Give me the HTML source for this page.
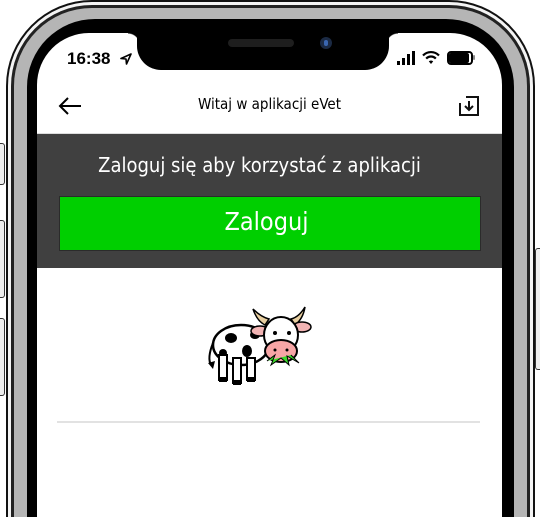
<!DOCTYPE html>
<html><head><meta charset="utf-8"><style>
html,body{margin:0;padding:0;width:541px;height:517px;overflow:hidden;background:#fff;font-family:"Liberation Sans",sans-serif;}
#wrap{position:relative;width:541px;height:517px;overflow:hidden;}
.abs{position:absolute;}
</style></head><body><div id="wrap">
<div class="abs" style="left:0;top:143px;width:4px;height:40px;border:1px solid #333;border-left:none;border-radius:0 3px 3px 0;background:#eee;"></div>
<div class="abs" style="left:0;top:220px;width:4px;height:76px;border:1px solid #333;border-left:none;border-radius:0 3px 3px 0;background:#eee;"></div>
<div class="abs" style="left:0;top:318px;width:4px;height:76px;border:1px solid #333;border-left:none;border-radius:0 3px 3px 0;background:#eee;"></div>
<div class="abs" style="left:535px;top:248px;width:4px;height:120px;border:1px solid #333;border-right:none;border-radius:3px 0 0 3px;background:#eee;"></div>
<div class="abs" style="left:6px;top:0px;width:529px;height:517px;border-radius:86px 86px 0 0;background:#111;"></div>
<div class="abs" style="left:8px;top:2px;width:525px;height:515px;border-radius:84px 84px 0 0;background:#f4f4f4;"></div>
<div class="abs" style="left:11px;top:5px;width:519px;height:512px;border-radius:81px 81px 0 0;background:#222;"></div>
<div class="abs" style="left:14px;top:8px;width:513px;height:509px;border-radius:78px 78px 0 0;background:#b5b5b5;"></div>
<div class="abs" style="left:27px;top:19px;width:487px;height:498px;border-radius:68px 68px 0 0;background:#000;"></div>
<div class="abs" style="left:37px;top:33px;width:465px;height:484px;border-radius:52px 52px 0 0;background:#fff;overflow:hidden;">
  <div class="abs" style="left:100px;top:-10px;width:252px;height:47px;background:#000;border-radius:0 0 24px 24px;"></div>
  <div class="abs" style="left:91px;top:0;width:12px;height:12px;background:radial-gradient(circle at 0 100%,transparent 11px,#000 12px);"></div>
  <div class="abs" style="left:349px;top:0;width:12px;height:12px;background:radial-gradient(circle at 100% 100%,transparent 11px,#000 12px);"></div>
  <div class="abs" style="left:191px;top:6px;width:66px;height:8px;border-radius:4px;background:#1e1e1e;"></div>
  <div class="abs" style="left:283px;top:4px;width:12px;height:12px;border-radius:6px;background:#1b2a44;"></div>
  <div class="abs" style="left:287px;top:7px;width:4px;height:6px;border-radius:2px;background:#3a66b0;"></div>
  <div class="abs" style="left:30px;top:16px;font-size:17px;font-weight:bold;color:#000;">16:38</div>
  <svg class="abs" style="left:83px;top:20px" width="12" height="12" viewBox="0 0 12 12"><path d="M11 1 L1 5.5 L6 6 L6.5 11 Z" fill="none" stroke="#000" stroke-width="1.6" stroke-linejoin="round"/></svg>
  <div class="abs" style="left:360px;top:28px;width:3px;height:4px;background:#000"></div>
  <div class="abs" style="left:365px;top:25px;width:3px;height:7px;background:#000"></div>
  <div class="abs" style="left:370px;top:21px;width:3px;height:11px;background:#000"></div>
  <div class="abs" style="left:375px;top:18px;width:3px;height:14px;background:#000"></div>
  <svg class="abs" style="left:385px;top:17px" width="18" height="15" viewBox="0 0 18 15"><path d="M1 5.5 A11 11 0 0 1 17 5.5" fill="none" stroke="#000" stroke-width="2.2"/><path d="M4.2 8.6 A6.5 6.5 0 0 1 13.8 8.6" fill="none" stroke="#000" stroke-width="2.2"/><path d="M9 14 L6.8 11.4 A3 3 0 0 1 11.2 11.4 Z" fill="#000"/></svg>
  <div class="abs" style="left:410px;top:18px;width:22px;height:10px;border:2px solid #000;border-radius:4px;"></div>
  <div class="abs" style="left:412px;top:20px;width:20px;height:10px;border-radius:2px;background:#000;"></div>
  <div class="abs" style="left:436px;top:22px;width:2px;height:5px;background:#888;border-radius:1px;"></div>
  <svg class="abs" style="left:20px;top:62px" width="26" height="22" viewBox="0 0 26 22"><path d="M24 11 H3 M11 3 L3 11 L11 19" fill="none" stroke="#000" stroke-width="2"/></svg>
  <div class="abs" style="left:0;width:465px;top:62px;text-align:center;font-size:15px;color:#000;font-family:'DejaVu Sans Condensed','Liberation Sans',sans-serif;">Witaj w aplikacji eVet</div>
  <svg class="abs" style="left:421px;top:62px" width="22" height="22" viewBox="0 0 22 22"><path d="M8 2 H20 V20 H2 V8" fill="none" stroke="#111" stroke-width="2"/><path d="M11 6 V15 M7 11 L11 15 L15 11" fill="none" stroke="#111" stroke-width="2"/></svg>
  <div class="abs" style="left:0;top:101px;width:465px;height:134px;background:#404040;"></div>
  <div class="abs" style="left:0;top:100px;width:465px;height:1px;background:#ddd;"></div>
  <div class="abs" style="left:0;width:445px;top:120px;text-align:center;font-size:20px;color:#fff;font-family:'DejaVu Sans Condensed','Liberation Sans',sans-serif;">Zaloguj się aby korzystać z aplikacji</div>
  <div class="abs" style="left:22px;top:163px;width:420px;height:53px;background:#00cf00;border:1px solid #2b2b2b;"></div>
  <div class="abs" style="left:22px;width:415px;top:174px;text-align:center;font-size:25px;color:#fff;font-family:'DejaVu Sans Condensed','Liberation Sans',sans-serif;">Zaloguj</div>
  <div class="abs" style="left:20px;top:388px;width:423px;height:2px;background:#e2e2e2;"></div>
  <svg class="abs" style="left:168px;top:270px" width="110" height="85" viewBox="0 0 110 85">
    <path d="M8 40 Q2 55 6 62" fill="none" stroke="#000" stroke-width="2"/>
    <path d="M3 60 L8 66 L10 58Z" fill="#000"/>
    <ellipse cx="36" cy="42" rx="28" ry="20" fill="#fff" stroke="#000" stroke-width="2.5"/>
    <ellipse cx="26" cy="35" rx="6" ry="5" fill="#000"/>
    <ellipse cx="42" cy="48" rx="5" ry="6" fill="#000"/>
    <ellipse cx="50" cy="32" rx="5" ry="4" fill="#000"/>
    <ellipse cx="18" cy="50" rx="4" ry="4" fill="#000"/>
    <rect x="14" y="52" width="8" height="25" fill="#fff" stroke="#000" stroke-width="2"/>
    <rect x="28" y="55" width="8" height="25" fill="#fff" stroke="#000" stroke-width="2"/>
    <rect x="42" y="55" width="8" height="22" fill="#fff" stroke="#000" stroke-width="2"/>
    <rect x="14" y="74" width="8" height="5" fill="#000"/><rect x="28" y="77" width="8" height="5" fill="#000"/><rect x="42" y="74" width="8" height="5" fill="#000"/>
    <path d="M60 22 Q52 18 48 6 Q56 14 64 16Z" fill="#e8cfa0" stroke="#000" stroke-width="1.5"/>
    <path d="M90 22 Q98 16 100 4 Q94 14 86 16Z" fill="#e8cfa0" stroke="#000" stroke-width="1.5"/>
    <ellipse cx="55" cy="28" rx="9" ry="5" fill="#f2b4b4" stroke="#000" stroke-width="1.5"/>
    <ellipse cx="97" cy="24" rx="9" ry="5" fill="#f2b4b4" stroke="#000" stroke-width="1.5"/>
    <ellipse cx="76" cy="32" rx="17" ry="18" fill="#fff" stroke="#000" stroke-width="2"/>
    <circle cx="70" cy="30" r="2" fill="#000"/><circle cx="84" cy="30" r="2" fill="#000"/>
    <ellipse cx="76" cy="48" rx="16" ry="11" fill="#f7a6a6" stroke="#000" stroke-width="2"/>
    <circle cx="70" cy="47" r="1.5" fill="#000"/><circle cx="82" cy="47" r="1.5" fill="#000"/>
    <path d="M62 58 L70 52 L66 62 L76 55 L84 62 L82 53 L94 60 L86 52" fill="#3adb2a" stroke="#000" stroke-width="1"/>
  </svg>
</div>
</div></body></html>
